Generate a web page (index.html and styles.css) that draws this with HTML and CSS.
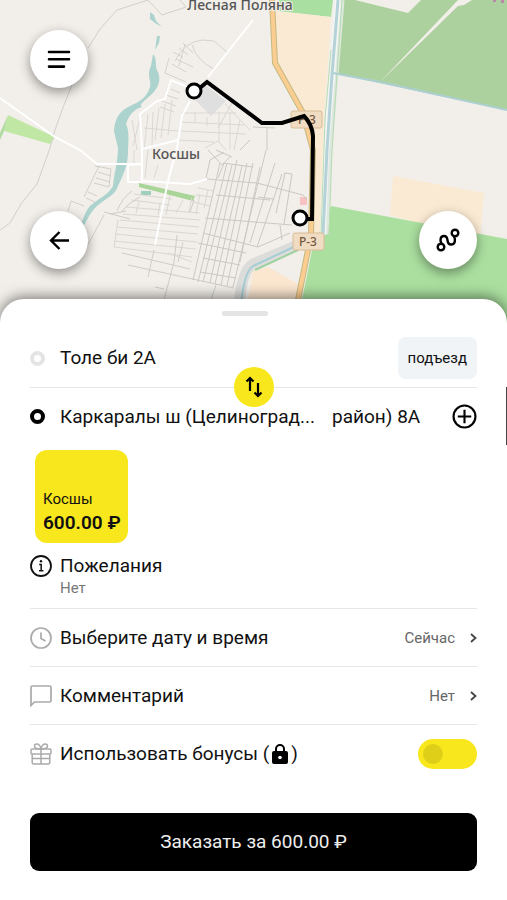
FILE: index.html
```html
<!DOCTYPE html>
<html lang="ru">
<head>
    <meta charset="UTF-8">
    <meta name="viewport" content="width=device-width, initial-scale=1.0">
    <title>Заказ такси</title>
    <link rel="stylesheet" href="styles.css">
</head>
<body>
    <section class="map">
        <svg class="map-canvas" viewBox="0 0 507 330" preserveAspectRatio="xMidYMin slice" aria-hidden="true">
            <rect width="507" height="330" fill="#f2efea"/>

            <!-- поля и лес -->
            <path d="M279 0H333L331 17L278 11Z" fill="#a9dfa0"/>
            <path d="M274 11L331 17L324 120L320 235H312L313 130L303 112L275 62Z" fill="#fbead3"/>
            <path d="M341 0H507V110L337 74Z" fill="#add19e"/>
            <path d="M355 0L408 13L421 0Z" fill="#f2efea"/>
            <path d="M380 82L458 0H472L464 5L458 6Z" fill="#f2efea"/>
            <path d="M393 176L484 193L480 240L390 215Z" fill="#fbead3"/>
            <path d="M331 206L507 239V330H296L312 250Z" fill="#aadf9f"/>
            <path d="M253 271L268 267L298 284L292 330H243Z" fill="#fbe6d0"/>
            <path d="M8 115L55 137L50 144L4 131Z" fill="#c0e8a4"/>
            <path d="M8 115L4 131L0 140V133Z" fill="#b0dba0"/>
            <path d="M139 183L195 196L193 201L139 187Z" fill="#a9d598"/>
            <path d="M141 191H151V195H141Z" fill="#9dd0bf"/>
            <path d="M204 84L226 101L211 116L194 99Z" fill="#e0dfdf"/>
            <path d="M300 197H307V205H300Z" fill="#f6c2c4"/>

            <!-- вода -->
            <g fill="#add3ce">
                <path d="M150 12L154 15L156 21L162 27L155 23L150 19Z"/>
                <path d="M157 36H160L159 43L155 50Z"/>
                <path d="M153 54C158 60 154 66 158 72C161 79 159 87 152 94C144 101 138 105 142 107C134 109 129 115 126 124C130 132 128 143 128 152C128 166 123 175 118 186C115 196 104 199 96 207C88 215 87 222 80 232L77 230C84 221 84 212 90 206C99 198 108 195 113 186C114 173 118 162 118 148L114 131C115 117 120 111 130 106C142 101 147 96 150 87C152 82 146 75 151 66Z"/>
            </g>
            <path d="M340 0L334 75L328 150L324 234" fill="none" stroke="#dfe8e0" stroke-width="9"/>
            <path d="M338 0L332 75L326 150L323 235" fill="none" stroke="#f4f6f3" stroke-width="6"/>
            <path d="M338 0L332 75L327 150L323 235" fill="none" stroke="#b5d2d9" stroke-width="3"/>
            <path d="M342 0L337 74L332 150L329 235M331 50L325 120L321 235" fill="none" stroke="#b6dcb0" stroke-width="1"/>
            <path d="M333 73L380 82L507 110" fill="none" stroke="#abcfd2" stroke-width="2"/>
            <path d="M300 244L253 264Q242 270 239 305" fill="none" stroke="#dcdcda" stroke-width="11"/>
            <path d="M300 244L253 266Q244 272 241 305" fill="none" stroke="#a5cdd4" stroke-width="2"/>
            <path d="M298 250L255 270" fill="none" stroke="#9fd2a2" stroke-width="2"/>

            <!-- тропы -->
            <g fill="none" stroke="#d2cfca" stroke-width="1">
                <path d="M0 230L10 223L21 204L37 184L50 148M72 85L62 110L54 133L50 148M88 48L100 29L117 10L148 0L162 15L186 7L180 0"/>
                <path d="M84 197L99 166M68 211L71 201L84 206M104 215L85 250"/>
                <path d="M95 166L111 169L109 187L94 183M98 172L111 176M96 178L110 182M88 192L97 196M86 198L95 202"/>
            </g>

            <!-- кварталы, северная часть -->
            <g fill="none" stroke="#d6d3cf" stroke-width="1">
                <path d="M165 73L169 58M165 73L186 82M175 61Q184 42 202 40L214 41L227 52M192 45Q197 61 214 69M173 52L183 57M179 48L188 55M183 43L193 53M172 64L186 72M176 59L193 67M185 44L179 66"/>
                <path d="M171 89L180 93M166 95L178 99M162 101L176 106M160 107L174 112M232 103L218 128"/>
            </g>
            <g fill="none" stroke="#dbd8d4" stroke-width="1">
                <path d="M140 118L133 146M148 114L144 150M153 112L152 145M159 108L155 140M165 104L161 138M172 100L168 135M144 128L178 131M132 120L137 150M182 113H236M180 122L244 125M180 131L246 134M178 140L214 142M195 112V122M207 117V126M219 112V142M230 112V150M240 120L234 150M205 148L218 141L226 150M225 104L250 130M134 150V165M148 150L145 178M158 165L154 178"/>
            </g>
            <!-- кварталы, центр -->
            <g fill="none" stroke="#dad7d3" stroke-width="1">
                <path d="M132 200L170 205M134 194L172 199M126 207L200 213M123 214L200 220M120 220L199 227M117 227L198 234M115 234L197 242M114 241L196 249M114 247L192 257M168 253L192 262"/>
                <path d="M118 220L114 247M139 201L136 213M160 204L158 215M170 195L166 215M183 200L176 213M192 197L189 212M200 194L196 214M208 190L204 208M198 188L214 191M196 195L212 197M193 202L210 206"/>
            </g>
            <g fill="none" stroke="#cfccc8" stroke-width="1">
                <path d="M104 212L130 219M110 214L126 211M117 211Q122 198 132 191M122 211Q128 203 140 197"/>
                <path d="M122 253L190 269M128 265L234 288M154 250L148 277M177 235L174 262L164 300M194 200L190 212M183 242L178 262M155 287L164 289M216 285L211 300"/>
            </g>
            <!-- кварталы, восточная часть -->
            <g fill="none" stroke="#cbc8c4" stroke-width="1">
                <path d="M220 163L193 280M227 163L198 282M232 165L203 282M237 160L210 283M242 166L215 284M247 163L221 285M253 163L227 286M266 150L233 287M260 167L240 262M275 163L250 243M282 174L257 247M285 173L276 213M292 174L284 224"/>
                <path d="M207 179L257 183L303 195L307 200M223 163L253 167M205 218L292 225M203 233L258 247L290 233M198 243L246 253M203 258L240 265M200 272L236 278M216 195L270 200M258 197L274 199M280 225L282 240M284 173L292 174"/>
                <path d="M206 178L210 160L224 152M208 150L222 165L230 157M216 150L232 157M224 163L218 178"/>
                <path d="M240 150L250 140M267 128V150M253 127L275 128"/>
            </g>

            <!-- улицы -->
            <g fill="none" stroke="#fff" stroke-width="2">
                <path d="M0 98L55 137L80 150L97 164L141 164M253 20L208 77"/>
                <path d="M190 88L171 80L165 99L157 101L140 114L142 150V182H128V165L141 164M190 101L182 116L177 148L168 181L155 245M141 181L190 184L207 179M142 149L178 140"/>
            </g>

            <!-- трасса Р-3 -->
            <path d="M272 0L275 63L303 113L313 150L311 235L298 300" fill="none" stroke="#c3b982" stroke-width="6"/>
            <path d="M272 0L275 63L303 113L313 150L311 235L298 300" fill="none" stroke="#fbcd91" stroke-width="4"/>
            <g fill="#f0dcc2" stroke="#d9bc98">
                <rect x="291" y="111" width="31" height="17" rx="2"/>
                <rect x="293" y="233" width="31" height="17" rx="2"/>
            </g>
            <g class="map-road-label">
                <text x="307" y="124">Р-3</text>
                <text x="308" y="246">Р-3</text>
            </g>
            <g class="map-place-label">
                <text x="240" y="10">Лесная Поляна</text>
                <text x="176" y="159">Косшы</text>
            </g>
            <path d="M493 0H496V2H493ZM501 0H504V3H501Z" fill="#b989a9"/>

            <!-- маршрут -->
            <path d="M195 92L207 82L262 123H282L304 116Q312 124 313 136L312 219H300" fill="none" stroke="#000" stroke-width="4"/>
            <g fill="#fff" stroke="#000" stroke-width="3">
                <circle cx="194" cy="91" r="7"/>
                <circle cx="300" cy="218" r="7"/>
            </g>
        </svg>

        <div class="map-row">
            <button class="round-button" type="button" aria-label="Меню">
                <svg width="24" height="24" viewBox="0 0 24 24" fill="none" stroke="#000" stroke-width="2.6" stroke-linecap="round">
                    <path d="M2 5H22M2 12.3H22M2 19.6H17"/>
                </svg>
            </button>
        </div>
        <div class="map-row">
            <button class="round-button" type="button" aria-label="Назад">
                <svg width="24" height="24" viewBox="0 0 24 24" fill="none" stroke="#000" stroke-width="2.4">
                    <path d="M22 12.5H4M12.5 4L4 12.5L12.5 21"/>
                </svg>
            </button>
            <button class="round-button" type="button" aria-label="Показать маршрут">
                <svg width="24" height="24" viewBox="0 0 24 24" fill="none" stroke="#000" stroke-width="2.4">
                    <circle cx="5" cy="19" r="3.3"/>
                    <circle cx="19" cy="5" r="3.3"/>
                    <path d="M5.5 15.5C3.5 12 4.5 8 8 8C14 8 9 16.5 15 16.5C19 16.5 20 12 18 8.5"/>
                </svg>
            </button>
        </div>
    </section>

    <main class="sheet">
        <div class="sheet-handle"></div>

        <div class="address">
            <span class="point"></span>
            <button class="address-name" type="button">Толе би 2А</button>
            <button class="entrance" type="button">подъезд</button>
            <button class="swap" type="button" aria-label="Поменять местами">
                <svg width="22" height="24" viewBox="0 0 22 24" fill="none" stroke="#000" stroke-width="2.2">
                    <path d="M7 16V3M3.5 6.5L7 3L10.5 6.5M15 8V21M11.5 17.5L15 21L18.5 17.5"/>
                </svg>
            </button>
        </div>
        <div class="address">
            <span class="point point-to"></span>
            <button class="address-name" type="button"><span>Каркаралы ш (Целиноград...</span><span>район) 8А</span></button>
            <button class="icon-button" type="button" aria-label="Добавить адрес">
                <svg width="25" height="25" viewBox="0 0 26 26" fill="none" stroke="#000" stroke-width="2.2">
                    <circle cx="13" cy="13" r="11.4"/>
                    <path d="M13 6V20M6 13H20"/>
                </svg>
            </button>
        </div>

        <button class="tariff" type="button">
            <span class="tariff-name">Косшы</span>
            <span class="tariff-price">600.00 ₽</span>
        </button>

        <button class="option option-wishes" type="button">
            <svg class="option-icon" width="22" height="24" viewBox="0 0 22 24" fill="none" stroke="#111" stroke-width="1.8">
                <circle cx="11" cy="12" r="10"/>
                <path d="M9.2 10.5H11.2V16.5M9 16.8H13.4" stroke-width="1.5"/>
                <circle cx="11" cy="7.2" r="1.2" fill="#111" stroke="none"/>
            </svg>
            <span class="option-text">
                <span class="option-title">Пожелания</span>
                <span class="option-note">Нет</span>
            </span>
        </button>

        <button class="option" type="button">
            <svg class="option-icon" width="22" height="22" viewBox="0 0 22 22" fill="none" stroke="#aaa" stroke-width="1.7">
                <circle cx="11" cy="11" r="10"/>
                <path d="M11 5.5V11.5L15.5 14"/>
            </svg>
            <span class="option-title">Выберите дату и время</span>
            <span class="option-value">Сейчас</span>
            <svg class="chevron" width="7" height="10" viewBox="0 0 7 10" fill="none" stroke="#444" stroke-width="1.8">
                <path d="M1 1L5.5 5L1 9"/>
            </svg>
        </button>

        <button class="option" type="button">
            <svg class="option-icon" width="22" height="22" viewBox="0 0 22 22" fill="none" stroke="#aaa" stroke-width="1.7">
                <path d="M1 20.5V2.5Q1 1 2.5 1H19.5Q21 1 21 2.5V15.5Q21 17 19.5 17H4.5Z"/>
            </svg>
            <span class="option-title">Комментарий</span>
            <span class="option-value">Нет</span>
            <svg class="chevron" width="7" height="10" viewBox="0 0 7 10" fill="none" stroke="#444" stroke-width="1.8">
                <path d="M1 1L5.5 5L1 9"/>
            </svg>
        </button>

        <div class="option option-bonus">
            <svg class="option-icon" width="22" height="22" viewBox="0 0 22 22" fill="none" stroke="#aaa" stroke-width="1.5">
                <rect x="1" y="6" width="20" height="5" rx="1"/>
                <path d="M2.2 11V19.5Q2.2 21 3.7 21H18.3Q19.8 21 19.8 19.5V11M11 6V21M2.2 15.5H19.8"/>
                <path d="M11 6C8 6 4.5 5.5 4.5 3C4.5 1.5 5.5 1 6.7 1C9 1 10.5 3.5 11 6C11.5 3.5 13 1 15.3 1C16.5 1 17.5 1.5 17.5 3C17.5 5.5 14 6 11 6Z"/>
            </svg>
            <label class="option-title bonus-label" for="bonus">Использовать бонусы (<svg width="16" height="20" viewBox="0 0 16 20" aria-hidden="true">
                    <path d="M4 8V5a4 4 0 0 1 8 0V8" fill="none" stroke="#000" stroke-width="2"/>
                    <rect y="7" width="16" height="13" rx="2"/>
                    <circle cx="8" cy="13.5" r="1.8" fill="#fff"/>
                </svg>)</label>
            <input class="switch" type="checkbox" id="bonus">
        </div>

        <button class="order-button" type="button">Заказать за 600.00 ₽</button>

        <div class="scroll-mark"></div>
    </main>
</body>
</html>
```

FILE: styles.css
```css
* {
    box-sizing: border-box;
}
body {
    margin: 0;
    min-height: 100vh;
    display: flex;
    flex-direction: column;
    background: #fff;
    color: #111;
    font-family: Roboto, "Noto Sans", sans-serif;
    font-size: 19px;
    line-height: 24px;
}
button {
    margin: 0;
    padding: 0;
    border: none;
    background: none;
    color: inherit;
    font: inherit;
    text-align: left;
    cursor: pointer;
}
svg {
    flex: none;
}

/* карта */
.map {
    position: relative;
    display: flex;
    flex-direction: column;
    gap: 123px;
    padding: 30px 30px 60px;
    overflow: hidden;
    background: #f2efea;
}
.map-canvas {
    position: absolute;
    top: 0;
    left: 0;
    width: 100%;
    height: 100%;
}
.map-place-label {
    font: 500 14px "Noto Sans", sans-serif;
    text-anchor: middle;
    fill: #555;
    stroke: #f2efea;
    stroke-width: 2px;
    paint-order: stroke;
}
.map-road-label {
    font: 500 12px "Noto Sans", sans-serif;
    text-anchor: middle;
    fill: #75583f;
}
.map-row {
    position: relative;
    display: flex;
    justify-content: space-between;
}
.round-button {
    display: flex;
    align-items: center;
    justify-content: center;
    width: 58px;
    height: 58px;
    border-radius: 50%;
    background: #fff;
    box-shadow: 0 4px 12px rgba(0, 0, 0, 0.4);
}

/* панель заказа */
.sheet {
    position: relative;
    flex: 1;
    margin-top: -30px;
    padding: 12px 30px 30px;
    border-radius: 24px 24px 0 0;
    background: #fff;
    box-shadow: 0 -2px 14px rgba(0, 0, 0, 0.5);
}
.sheet-handle {
    width: 46px;
    height: 5px;
    margin: 0 0 13px 43%;
    border-radius: 2px;
    background: #e4e4e4;
}
.address {
    position: relative;
    display: flex;
    align-items: center;
    height: 59px;
    border-bottom: 1px solid #e6e6e6;
}
.address + .address {
    height: 57px;
    border-bottom: none;
}
.point {
    flex: none;
    width: 15px;
    height: 15px;
    margin-right: 15px;
    border: 4px solid #e4e4e4;
    border-radius: 50%;
}
.point-to {
    border-color: #000;
}
.address-name {
    display: flex;
    flex: 1;
    gap: 17px;
    white-space: nowrap;
}
.entrance {
    height: 42px;
    padding: 0 10px;
    border-radius: 8px;
    background: #f0f4f7;
    font-size: 15px;
}
.swap {
    position: absolute;
    left: 50%;
    bottom: -20px;
    z-index: 1;
    display: flex;
    align-items: center;
    justify-content: center;
    width: 40px;
    height: 40px;
    margin-left: -20px;
    border-radius: 50%;
    background: #f8e71c;
}
.icon-button {
    display: flex;
}
.tariff {
    display: flex;
    flex-direction: column;
    justify-content: flex-end;
    width: 93px;
    height: 93px;
    margin: 5px 5px 0;
    padding: 8px;
    border-radius: 12px;
    background: #f8e71c;
    white-space: nowrap;
}
.tariff-name {
    font-size: 15px;
}
.tariff-price {
    font-weight: 600;
}
.option {
    display: flex;
    align-items: center;
    width: 100%;
    height: 58px;
    border-bottom: 1px solid #e6e6e6;
}
.option-wishes {
    align-items: flex-start;
    height: 66px;
    padding-top: 11px;
}
.option-bonus {
    border-bottom: none;
}
.option-icon {
    margin-right: 8px;
}
.option-text {
    display: flex;
    flex-direction: column;
}
.option-title {
    flex: 1;
}
.option-note {
    color: #777;
    font-size: 15px;
    line-height: 20px;
}
.option-value {
    margin-right: 15px;
    color: #666;
    font-size: 15px;
}
.bonus-label {
    display: flex;
    align-items: center;
    gap: 3px;
}
.switch {
    appearance: none;
    display: flex;
    align-items: center;
    width: 59px;
    height: 30px;
    margin: 0;
    padding: 0 5px;
    border-radius: 15px;
    background: #f8e71c;
    cursor: pointer;
}
.switch::before {
    content: "";
    width: 20px;
    height: 20px;
    border-radius: 50%;
    background: #dfcf19;
}
.switch:checked {
    justify-content: flex-end;
}
.order-button {
    display: block;
    width: 100%;
    height: 58px;
    margin-top: 30px;
    border-radius: 9px;
    background: #000;
    color: #eee;
    text-align: center;
}
.scroll-mark {
    position: absolute;
    top: 88px;
    right: 0;
    width: 1px;
    height: 58px;
    background: #444;
}
```
